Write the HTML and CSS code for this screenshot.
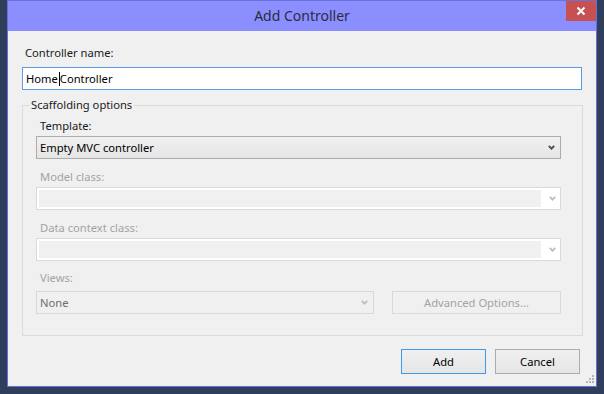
FILE: index.html
```html
<!DOCTYPE html>
<html>
<head>
<meta charset="utf-8">
<title>Add Controller</title>
<link rel="stylesheet" href="styles.css">
</head>
<body>
<div class="window">
  <div class="titlebar">
    <div></div>
    <div class="title">Add Controller</div>
    <div class="close">
      <svg width="10" height="10" viewBox="0 0 10 10"><path d="M1.5 1.5 L8.5 8.5 M8.5 1.5 L1.5 8.5" stroke="#fff" stroke-width="2" fill="none"/></svg>
    </div>
  </div>
  <div class="content">
    <div class="label">Controller name:</div>
    <div class="textbox"><span>Home</span><span class="caret"></span><span>Controller</span></div>
    <fieldset class="group">
      <legend>Scaffolding options</legend>
      <div class="group-inner">
        <div class="label field-label">Template:</div>
        <div class="combo">
          <span class="combo-text">Empty MVC controller</span>
          <svg class="chev" width="7" height="5" viewBox="0 0 7 5"><path d="M0.8 0.8 L3.5 3.6 L6.2 0.8" stroke="#4a4a4a" stroke-width="1.8" fill="none"/></svg>
        </div>
        <div class="label field-label disabled gap">Model class:</div>
        <div class="combo-off">
          <div class="combo-fill"></div>
          <div class="combo-btn"><svg class="chev" width="7" height="5" viewBox="0 0 7 5"><path d="M0.8 0.8 L3.5 3.6 L6.2 0.8" stroke="#bdbdbd" stroke-width="1.8" fill="none"/></svg></div>
        </div>
        <div class="label field-label disabled gap">Data context class:</div>
        <div class="combo-off">
          <div class="combo-fill"></div>
          <div class="combo-btn"><svg class="chev" width="7" height="5" viewBox="0 0 7 5"><path d="M0.8 0.8 L3.5 3.6 L6.2 0.8" stroke="#bdbdbd" stroke-width="1.8" fill="none"/></svg></div>
        </div>
        <div class="label field-label disabled gap-views">Views:</div>
        <div class="views-row">
          <div class="combo views">
            <span class="combo-text none">None</span>
            <svg class="chev" width="7" height="5" viewBox="0 0 7 5"><path d="M0.8 0.8 L3.5 3.6 L6.2 0.8" stroke="#bdbdbd" stroke-width="1.8" fill="none"/></svg>
          </div>
          <div class="btn-off">Advanced Options...</div>
        </div>
      </div>
    </fieldset>
    <div class="buttons">
      <div class="btn default">Add</div>
      <div class="btn">Cancel</div>
    </div>
  </div>
  <svg class="grip" width="8" height="8" viewBox="0 0 8 8">
    <rect x="6" y="0" width="2" height="2" fill="#b4b4b4"/>
    <rect x="3" y="3" width="2" height="2" fill="#b4b4b4"/>
    <rect x="6" y="3" width="2" height="2" fill="#b4b4b4"/>
    <rect x="0" y="6" width="2" height="2" fill="#b4b4b4"/>
    <rect x="3" y="6" width="2" height="2" fill="#b4b4b4"/>
    <rect x="6" y="6" width="2" height="2" fill="#b4b4b4"/>
  </svg>
</div>
</body>
</html>
```
FILE: styles.css
```css
html, body {
  margin: 0;
  padding: 0;
}
body {
  background: #2f3e5b;
  width: 604px;
  height: 394px;
  overflow: hidden;
  font-family: "Noto Sans", "Open Sans", sans-serif;
  font-size: 11.2px;
  color: #1a1a1a;
}
.window {
  position: relative;
  margin-left: 7px;
  width: 590px;
  height: 387px;
  box-sizing: border-box;
  border: 1px solid #6b70d9;
  background: #f0f0f0;
  display: flex;
  flex-direction: column;
}
.titlebar {
  height: 30px;
  background: #8a8eff;
  display: grid;
  grid-template-columns: 1fr auto 1fr;
}
.title {
  font-size: 14px;
  line-height: 30px;
  color: #2c2c3c;
}
.close {
  justify-self: end;
  align-self: start;
  width: 30px;
  height: 20px;
  background: #c75050;
  display: flex;
  align-items: center;
  justify-content: center;
}
.close svg {
  display: block;
  margin-top: -1px;
}
.content {
  padding: 14px 14px 12px 14px;
  display: flex;
  flex-direction: column;
}
.label {
  line-height: 16px;
  height: 16px;
  padding-left: 3px;
  white-space: nowrap;
}
.textbox {
  margin-top: 6px;
  height: 23px;
  box-sizing: border-box;
  border: 1px solid #569de5;
  background: #fff;
  line-height: 21px;
  padding-left: 3px;
  color: #000;
  display: flex;
  align-items: center;
  white-space: nowrap;
}
.caret {
  display: inline-block;
  width: 1px;
  height: 14px;
  background: #000;
  margin: 0 0 0 1px;
}
.group {
  margin: 7px -1px 0 0;
  padding: 0;
  border: 1px solid #dadada;
  height: 239px;
  box-sizing: border-box;
  min-width: 0;
}
.group legend {
  margin-left: 6px;
  padding: 0 2px;
  line-height: 16px;
  height: 16px;
  color: #1a1a1a;
}
.group-inner {
  padding: 5px 21px 0 13px;
}
.field-label {
  padding-left: 4px;
}
.disabled {
  color: #a3a3a3;
}
.gap {
  margin-top: 10px;
}
.gap-views {
  margin-top: 9px;
}
.combo {
  margin-top: 2px;
  height: 23px;
  box-sizing: border-box;
  border: 1px solid #acacac;
  background: linear-gradient(#f0f0f0, #e5e5e5);
  display: flex;
  align-items: center;
  padding: 0 5px 0 3px;
  line-height: 21px;
}
.combo-text {
  flex: 1;
  color: #000;
  white-space: nowrap;
}
.chev {
  display: block;
}
.combo-off {
  margin-top: 2px;
  height: 23px;
  box-sizing: border-box;
  border: 1px solid #d9d9d9;
  background: #fff;
  padding: 2px;
  display: flex;
}
.combo-fill {
  flex: 1;
  background: #f0f0f0;
}
.combo-btn {
  width: 17px;
  display: flex;
  align-items: center;
  justify-content: flex-end;
  padding-right: 2px;
  box-sizing: border-box;
}
.views-row {
  margin-top: 5px;
  display: flex;
  gap: 18px;
}
.combo.views {
  margin-top: 0;
  width: 338px;
  border-color: #d9d9d9;
  background: #f0f0f0;
}
.combo-text.none {
  color: #6d6d6d;
}
.btn-off {
  width: 169px;
  height: 23px;
  box-sizing: border-box;
  border: 1px solid #d9d9d9;
  background: #f0f0f0;
  color: #a3a3a3;
  text-align: center;
  line-height: 21px;
  white-space: nowrap;
}
.buttons {
  margin-top: 13px;
  display: flex;
  justify-content: flex-end;
  gap: 9px;
  padding-right: 2px;
}
.btn {
  width: 85px;
  height: 25px;
  box-sizing: border-box;
  border: 1px solid #acacac;
  background: linear-gradient(#f0f0f0, #e5e5e5);
  text-align: center;
  line-height: 23px;
  color: #000;
}
.btn.default {
  border-color: #3c9ae8;
}
.grip {
  position: absolute;
  right: 2px;
  bottom: 3px;
  display: block;
}
```
